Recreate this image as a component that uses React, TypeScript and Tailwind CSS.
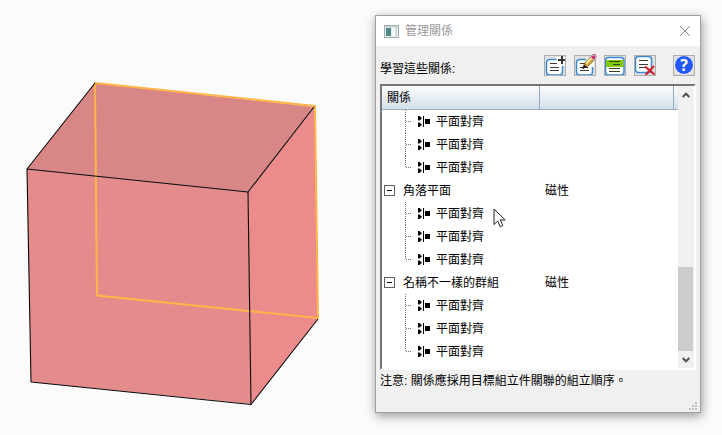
import { useState } from 'react'
import type { ReactNode } from 'react'

interface RelationGroup {
  id: string
  name?: string
  type?: string
  children: string[]
}

const groups: RelationGroup[] = [
  { id: 'previous', children: ['平面對齊', '平面對齊', '平面對齊'] },
  { id: 'corner', name: '角落平面', type: '磁性', children: ['平面對齊', '平面對齊', '平面對齊'] },
  { id: 'named', name: '名稱不一樣的群組', type: '磁性', children: ['平面對齊', '平面對齊', '平面對齊'] },
]

function CubeView() {
  return (
    <svg viewBox="0 0 375 435" className="block h-auto w-full" role="img" aria-label="cube">
      <polygon points="95,83 315,107 248,192 27,169" fill="#d88686" />
      <polygon points="27,169 248,192 251,404 31,382" fill="#e48c8b" />
      <polygon points="248,192 315,107 318,319 251,404" fill="#ec8b8c" />
      <g stroke="#ffb547" strokeWidth="2" fill="none" strokeLinejoin="round">
        <path d="M95 83 L97 295.500 L318 318 L315 106 Z" />
      </g>
      <g stroke="#0a0a0a" strokeWidth="1.100" fill="none" strokeLinejoin="round">
        <path d="M95 83 L27 169 L31 382 L251 404.500 L318 319" />
        <path d="M27 169 L248 192 L314 107" />
        <path d="M248 192 L251 404" />
      </g>
    </svg>
  )
}

function AppIcon() {
  return (
    <svg viewBox="0 0 15 13" className="h-[13px] w-[15px]" aria-hidden="true">
      <rect x="0.500" y="0.500" width="14" height="12" fill="#e9eeec" stroke="#9fb0b2" />
      <rect x="1" y="1" width="13" height="1.500" fill="#c5cfd0" />
      <rect x="2" y="3" width="5" height="8" fill="#4d8985" />
      <rect x="8" y="3" width="3" height="8" fill="#f8fafa" />
      <rect x="11.500" y="3" width="1.500" height="8" fill="#c8d7cf" />
    </svg>
  )
}

function AddIcon() {
  return (
    <svg viewBox="0 0 22 21" className="h-[21px] w-[22px] shrink-0 overflow-visible" aria-hidden="true">
      <rect x="2.500" y="4.500" width="16" height="15.500" rx="3" fill="#fff" stroke="#3a8ad8" strokeWidth="1.500" />
      <path d="M12 2h9v9h-7z" fill="#fff" />
      <path d="M6 8.500h7M6 12.500h9M6 15.500h9" stroke="#3a3a3a" />
      <path d="M18 1v8M14 5h8" stroke="#333" strokeWidth="2" />
    </svg>
  )
}

function EditIcon() {
  return (
    <svg viewBox="0 0 22 21" className="h-[21px] w-[22px] shrink-0 overflow-visible" aria-hidden="true">
      <rect x="2.500" y="4.500" width="16" height="15.500" rx="3" fill="#fff" stroke="#3a8ad8" strokeWidth="1.500" />
      <path d="M12 3h8v9h-8z" fill="#fff" />
      <path d="M6 8.500h5M6 12.500h8M6 15.500h9" stroke="#3a3a3a" />
      <path d="M9 13.500 L11 7.500 L17 1.500 L20.500 5 L14 11 Z" fill="#e0a63a" stroke="#76541e" strokeWidth="0.800" />
      <path d="M12 8.500 L18 2.500" stroke="#fff0a8" strokeWidth="1.800" />
      <path d="M8 14 L10 9.500 L13 12 Z" fill="#1c1c1c" />
      <path d="M16 2 L18 0 L21.500 3.500 L19.500 5.500 Z" fill="#b4b4b8" />
      <circle cx="20" cy="1.500" r="2.500" fill="#d6306c" />
    </svg>
  )
}

function HighlightIcon() {
  return (
    <svg viewBox="0 0 22 21" className="h-[21px] w-[22px] shrink-0" aria-hidden="true">
      <rect x="1.500" y="2.500" width="18.500" height="17.500" rx="3" fill="#fff" stroke="#3a8ad8" strokeWidth="1.500" />
      <path d="M2 5h17.500v7h-17.500z" fill="#84c80b" />
      <path d="M5 6.500h11M9 9.500h7M5 13.500h11M5 16.500h11" stroke="#33421c" />
    </svg>
  )
}

function DeleteIcon() {
  return (
    <svg viewBox="0 0 22 21" className="h-[21px] w-[22px] shrink-0" aria-hidden="true">
      <rect x="1.500" y="1.500" width="16" height="16" rx="3" fill="#fff" stroke="#3a8ad8" strokeWidth="1.500" />
      <path d="M5 5.500h9M5 9.500h9M5 12.500h6" stroke="#3a3a3a" />
      <path d="M11 11.500 L20.500 19.500 M20 11 L11.500 20" stroke="#d3202b" strokeWidth="2.200" />
    </svg>
  )
}

function ToolButton({ label, children }: { label: string; children: ReactNode }) {
  return (
    <button
      type="button"
      aria-label={label}
      className="flex h-[21px] w-[22px] items-center justify-center bg-[#e1e1e1] outline outline-1 -outline-offset-1 outline-[#adadad]"
    >
      {children}
    </button>
  )
}

function AlignIcon() {
  return (
    <svg viewBox="0 0 13 11" className="h-[11px] w-[13px] shrink-0" aria-hidden="true">
      <path d="M0 0h1.500l2.500 2.300l-2.500 2.200h-1.500zM0 6.500h1.500l2.500 2.200l-2.500 2.300h-1.500z" fill="#000" />
      <path d="M5 0h1v11h-1zM7 3h5v5h-5z" fill="#000" />
    </svg>
  )
}

function TreeLine({ last }: { last: boolean }) {
  return (
    <svg viewBox="0 0 8 23" className="h-[23px] w-2 shrink-0" aria-hidden="true">
      <path
        d={last ? 'M0.500 0V12M1 11.500H7' : 'M0.500 0V23M1 11.500H7'}
        stroke="#707070"
        strokeDasharray="1 1"
        fill="none"
      />
    </svg>
  )
}

function MouseCursor() {
  return (
    <svg viewBox="0 0 13 20" className="pointer-events-none absolute left-[111px] top-[122px] h-5 w-[13px]" aria-hidden="true">
      <path
        d="M1 1V16.500L4.700 13L7.200 18.800L9.800 17.600L7.300 12H12.200Z"
        fill="#fff"
        stroke="#222"
        strokeLinejoin="round"
      />
    </svg>
  )
}

function RelationTable() {
  const [collapsed, setCollapsed] = useState<string[]>([])

  const toggle = (id: string) => {
    setCollapsed((ids) => (ids.includes(id) ? ids.filter((i) => i !== id) : [...ids, id]))
  }

  return (
    <table className="w-full table-fixed border-collapse text-left text-xs">
      <colgroup>
        <col className="w-[157px]" />
        <col />
        <col className="w-[5px]" />
      </colgroup>
      <thead>
        <tr className="h-6 bg-linear-to-b from-[#fbfcfd] to-[#d3deea] shadow-[inset_0_-1px_0_#9aabbb]">
          <th className="border-r border-[#93a9c0] p-0 pl-[5px] font-normal">關係</th>
          <th className="border-r border-[#93a9c0] p-0" aria-label="類型" />
          <td className="p-0" />
        </tr>
      </thead>
      {groups.map((group) => {
        const open = !collapsed.includes(group.id)
        return (
          <tbody key={group.id}>
            {group.name && (
              <tr className="h-[23px]">
                <td className="p-0 whitespace-nowrap">
                  <div className="flex items-center gap-2 pl-[2px]">
                    <button
                      type="button"
                      aria-label={group.name}
                      aria-expanded={open}
                      onClick={() => toggle(group.id)}
                      className="flex size-[11px] items-center justify-center border border-[#606060] bg-white"
                    >
                      <span className="h-px w-[5px] bg-black" />
                    </button>
                    {group.name}
                  </div>
                </td>
                <td className="p-0 pl-[6px]">{group.type}</td>
                <td className="p-0" />
              </tr>
            )}
            {open &&
              group.children.map((child, index) => (
                <tr key={index} className="h-[23px]">
                  <td className="p-0">
                    <div className="flex h-[23px] items-center pl-[23px]">
                      <TreeLine last={index === group.children.length - 1} />
                      <span className="flex items-center gap-[5px] pl-[5px]">
                        <AlignIcon />
                        {child}
                      </span>
                    </div>
                  </td>
                  <td className="p-0" />
                  <td className="p-0" />
                </tr>
              ))}
          </tbody>
        )
      })}
    </table>
  )
}

function ScrollBar() {
  return (
    <div className="flex w-4 shrink-0 flex-col bg-[#f0f0f0]">
      <button type="button" aria-label="向上" className="flex h-[17px] items-center justify-center">
        <svg viewBox="0 0 8 6" className="h-[6px] w-2" aria-hidden="true">
          <path d="M0.700 5L4 1.700L7.300 5" stroke="#505050" strokeWidth="2" fill="none" />
        </svg>
      </button>
      <div className="flex flex-1 flex-col justify-end pr-px">
        <div className="h-[34%] bg-[#cdcdcd]" />
      </div>
      <button type="button" aria-label="向下" className="flex h-[17px] items-center justify-center">
        <svg viewBox="0 0 8 6" className="h-[6px] w-2" aria-hidden="true">
          <path d="M0.700 1L4 4.300L7.300 1" stroke="#505050" strokeWidth="2" fill="none" />
        </svg>
      </button>
    </div>
  )
}

export default function App() {
  return (
    <main className="grid min-h-screen grid-cols-[375fr_326fr] items-start bg-[#fbfbfb] pr-[21px] font-['Liberation_Sans','Noto_Sans_CJK_TC',sans-serif] text-xs text-black">
      <CubeView />

      <section
        role="dialog"
        aria-labelledby="dialog-title"
        className="mt-[15px] border border-[#a0a0a0] bg-[#f0f0f0] shadow-[1px_3px_10px_rgba(0,0,0,0.4)]"
      >
        {/* Title bar */}
        <header className="flex h-[30px] items-center bg-white pr-[9px] pl-2">
          <AppIcon />
          <h1 id="dialog-title" className="ml-[6px] flex-1 text-xs text-[#999]">
            管理關係
          </h1>
          <button type="button" aria-label="關閉" className="p-px">
            <svg viewBox="0 0 10 10" className="size-[10px]" aria-hidden="true">
              <path d="M0 0L10 10M10 0L0 10" stroke="#8a8a8a" fill="none" />
            </svg>
          </button>
        </header>

        {/* Toolbar */}
        <div className="flex h-[38px] items-center px-1">
          <p className="flex-1 pt-2">學習這些關係:</p>
          <div className="flex items-center gap-2 pr-px">
            <ToolButton label="新增">
              <AddIcon />
            </ToolButton>
            <ToolButton label="編輯">
              <EditIcon />
            </ToolButton>
            <ToolButton label="顯示">
              <HighlightIcon />
            </ToolButton>
            <ToolButton label="刪除">
              <DeleteIcon />
            </ToolButton>
            <div className="ml-[9px]">
              <ToolButton label="說明">
                <span className="flex size-5 items-center justify-center rounded-full border border-white bg-[#2459f5] font-['Open_Sans',sans-serif] text-base leading-none font-bold text-white">
                  ?
                </span>
              </ToolButton>
            </div>
          </div>
        </div>

        {/* Relationship list */}
        <div className="px-1">
          <div className="relative flex border-2 border-t-[#767676] border-r-white border-b-white border-l-[#767676] bg-white">
            <div className="min-w-0 flex-1 pb-[5px]">
              <RelationTable />
            </div>
            <ScrollBar />
            <MouseCursor />
          </div>
        </div>

        {/* Note and resize grip */}
        <footer className="flex h-[42px] justify-between pr-[3px] pb-[2px] pl-1">
          <p className="pt-[3px]">注意: 關係應採用目標組立件關聯的組立順序。</p>
          <svg viewBox="0 0 8 8" className="size-2 self-end" aria-hidden="true">
            <path d="M6 0h2v2h-2zM3 3h2v2h-2zM6 3h2v2h-2zM0 6h2v2h-2zM3 6h2v2h-2zM6 6h2v2h-2z" fill="#bfbfbf" />
          </svg>
        </footer>
      </section>
    </main>
  )
}
